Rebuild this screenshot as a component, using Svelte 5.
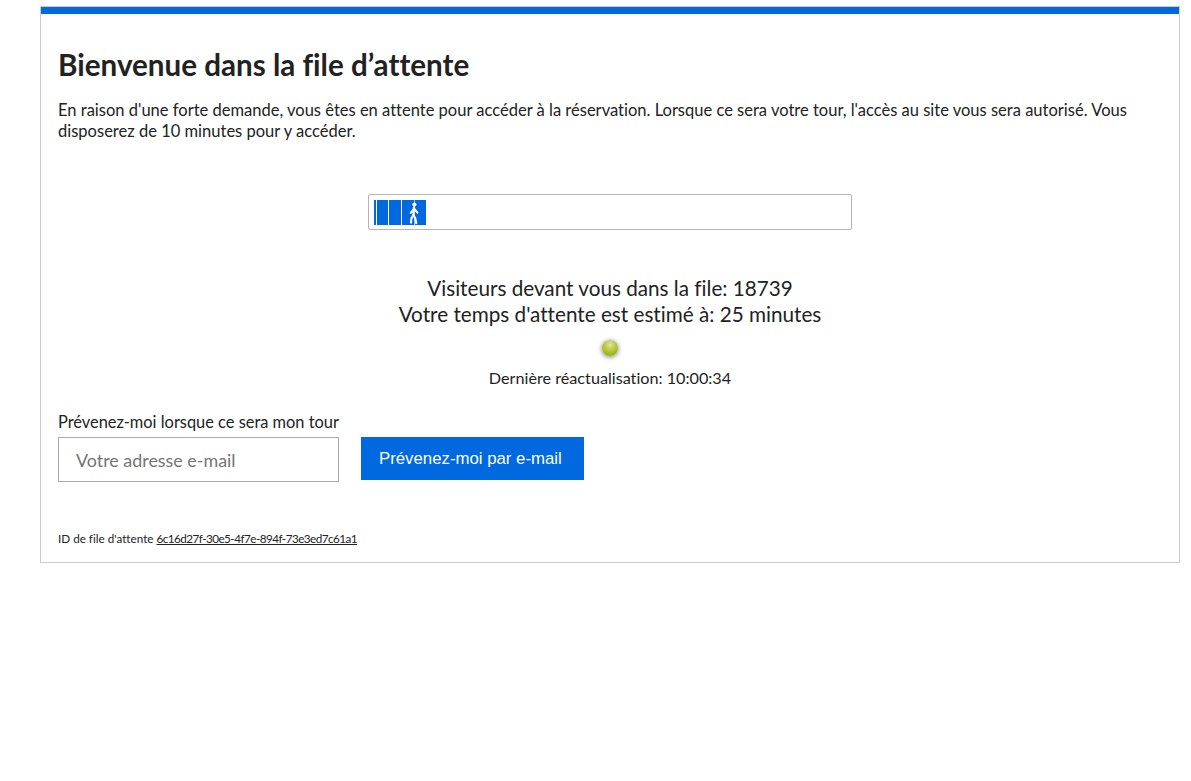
<script>
  const blocks = ["thin", "mid", "wide"];
</script>

<main class="page">
  <div class="card">
    <div class="top-bar"></div>
    <div class="content">
      <h1>Bienvenue dans la file d’attente</h1>
      <p class="intro">En raison d'une forte demande, vous êtes en attente pour accéder à la réservation. Lorsque ce sera votre tour, l'accès au site vous sera autorisé. Vous disposerez de 10 minutes pour y accéder.</p>

      <div class="progress">
        {#each blocks as b}
          <div class="block {b}"></div>
        {/each}
        <div class="block last">
          <svg width="24" height="25" viewBox="0 0 24 25" aria-hidden="true">
            <path d="M12.5 0V25" stroke="#8fc0f5" stroke-width="1" fill="none" />
            <circle cx="12.4" cy="4.6" r="2.1" fill="#fff" />
            <path d="M12 7.4 11.4 15M12 8.6 8.8 12.8M12.2 8.6 15.4 12.6M11.4 15 9.4 18.4 9 22.6M11.4 15 13.4 18.6 14.2 23.2" stroke="#fff" stroke-width="2.1" stroke-linecap="round" stroke-linejoin="round" fill="none" />
          </svg>
        </div>
      </div>

      <div class="status">
        <p>Visiteurs devant vous dans la file: 18739</p>
        <p>Votre temps d'attente est estimé à: 25 minutes</p>
      </div>
      <div class="ball-row"><span class="ball"></span></div>
      <p class="updated">Dernière réactualisation: 10:00:34</p>

      <label class="notify-label" for="email">Prévenez-moi lorsque ce sera mon tour</label>
      <div class="notify-row">
        <input id="email" type="text" placeholder="Votre adresse e-mail" />
        <button type="button">Prévenez-moi par e-mail</button>
      </div>

      <p class="queue-id">ID de file d'attente <a href="#id">6c16d27f-30e5-4f7e-894f-73e3ed7c61a1</a></p>
    </div>
  </div>
</main>

<style>
  :global(body) {
    background: #fff;
    color: #222;
    font-family: Lato, "Noto Sans", sans-serif;
    font-variant-ligatures: none;
  }

  .page {
    padding: 6px 11px 0 40px;
  }

  .card {
    border: 1px solid #ccc;
    background: #fff;
  }

  .top-bar {
    height: 7px;
    background: #0069e0;
  }

  .content {
    padding: 0 17px 16px;
  }

  h1 {
    margin: 0;
    padding-top: 33px;
    font-size: 29.6px;
    font-weight: 700;
    line-height: 36px;
    color: #222;
  }

  .intro {
    margin: 17px 0 0;
    font-size: 16.53px;
    line-height: 21px;
  }

  .progress {
    display: flex;
    align-items: center;
    gap: 1px;
    width: 482px;
    height: 34px;
    margin: 52px auto 0;
    border: 1px solid #b5b5b5;
    border-radius: 2px;
  }

  .block {
    height: 25px;
    background: #0069e0;
  }

  .block.thin {
    width: 2px;
    margin-left: 5px;
  }

  .block.mid {
    width: 11px;
  }

  .block.wide {
    width: 12px;
  }

  .block.last {
    width: 24px;
  }

  .block.last svg {
    display: block;
  }

  .status {
    margin-top: 45px;
    text-align: center;
    font-size: 20.7px;
    line-height: 26px;
  }

  .status p {
    margin: 0;
  }

  .ball-row {
    display: flex;
    justify-content: center;
    margin-top: 13px;
  }

  .ball {
    width: 16px;
    height: 16px;
    border-radius: 50%;
    background: radial-gradient(circle at 50% 30%, #dbe69a, #a8bd1e 60%, #8fa214);
    box-shadow: 0 1px 5px rgba(0, 0, 0, 0.55);
  }

  .updated {
    margin: 12px 0 0;
    text-align: center;
    font-size: 16.2px;
    line-height: 20px;
  }

  .notify-label {
    display: block;
    margin-top: 24px;
    font-size: 16.4px;
    line-height: 20px;
  }

  .notify-row {
    display: flex;
    align-items: flex-start;
    gap: 22px;
    margin-top: 5px;
  }

  input {
    box-sizing: border-box;
    width: 281px;
    height: 45px;
    border: 1px solid #aaa;
    border-radius: 0;
    padding: 1px 17px 0;
    font-family: inherit;
    font-size: 17.9px;
    color: #222;
  }

  input::placeholder {
    color: #757575;
    opacity: 1;
  }

  button {
    box-sizing: border-box;
    width: 223px;
    height: 43px;
    border: 0;
    padding: 0 0 0 18px;
    background: #0069e0;
    color: #fff;
    font-family: "Liberation Sans", Arial, sans-serif;
    font-size: 16.8px;
    text-align: left;
  }

  .queue-id {
    margin: 48px 0 0;
    font-size: 11.7px;
    line-height: 16px;
  }

  .queue-id a {
    color: #222;
    letter-spacing: -0.53px;
  }
</style>
